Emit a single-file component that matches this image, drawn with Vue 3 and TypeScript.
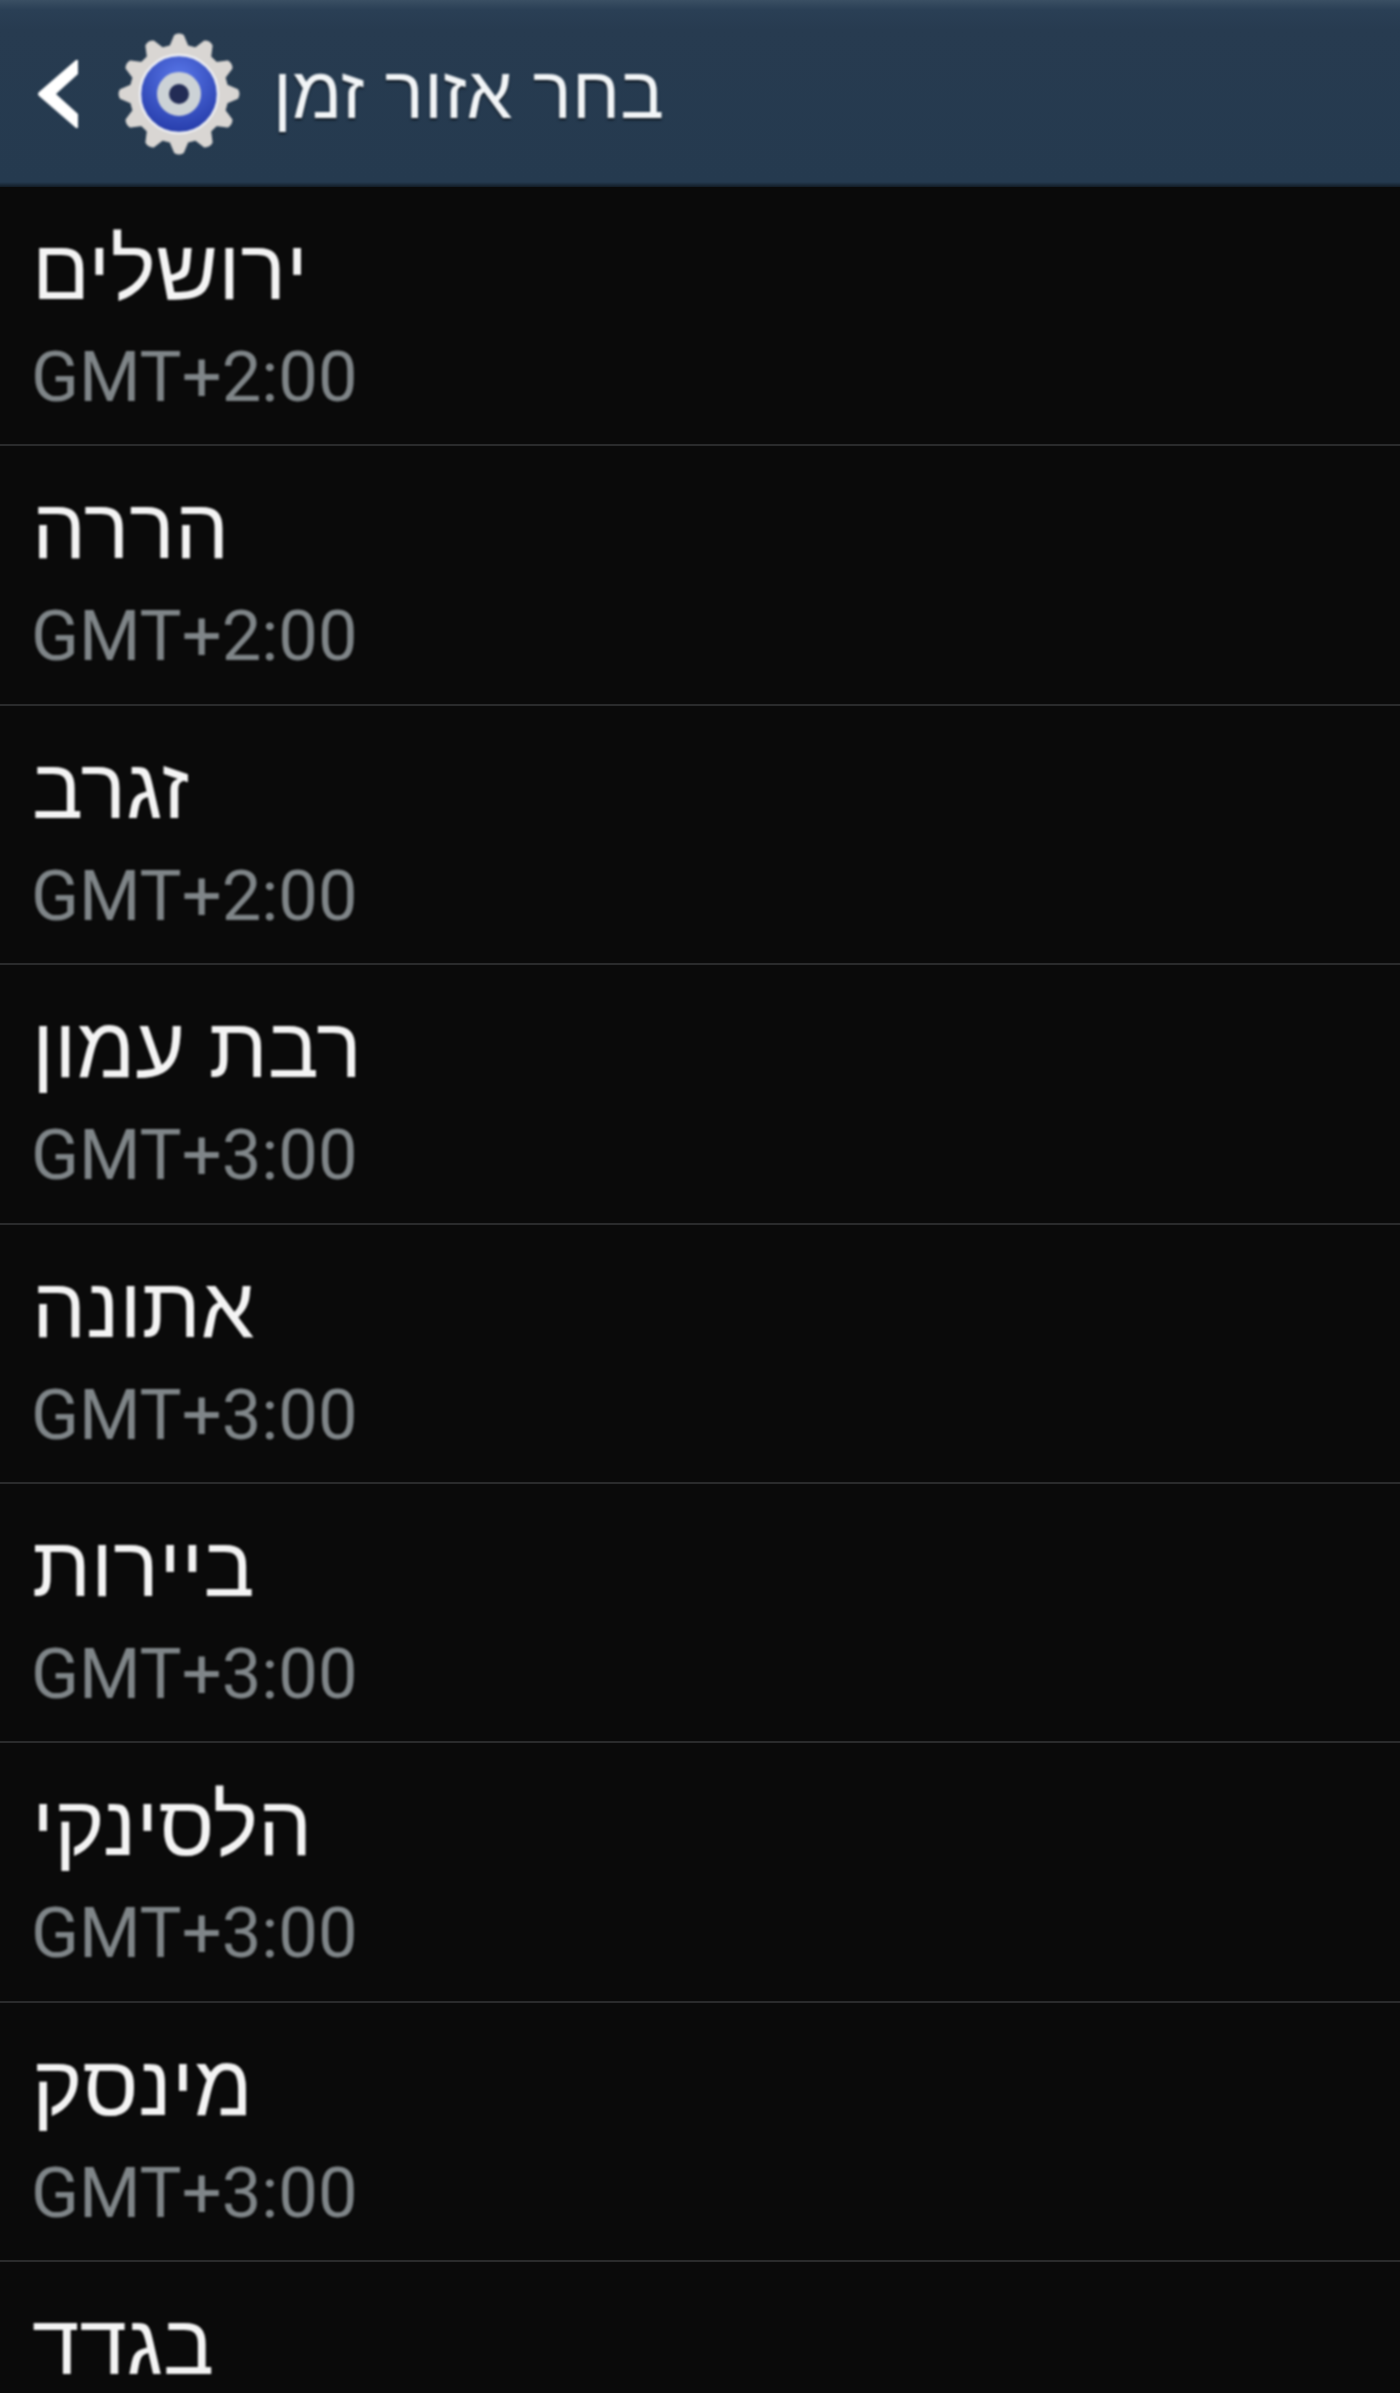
<template>
  <div class="screen">
    <header class="action-bar">
      <svg class="back" viewBox="0 0 42 70" width="42" height="70">
        <path d="M39 1 L2 33 Q0 35 2 37 L39 69 L41 69 L41 55 L19 35 L41 15 L41 1 Z" fill="#fff" />
      </svg>
      <svg class="gear" viewBox="-62 -62 124 124" width="124" height="124">
        <defs>
          <radialGradient id="ring" cx="50%" cy="30%" r="75%">
            <stop offset="0%" stop-color="#5a78ea" />
            <stop offset="100%" stop-color="#2238a6" />
          </radialGradient>
        </defs>
        <path :d="gearPath" fill="#d9d6d3" stroke="#d9d6d3" stroke-width="3" stroke-linejoin="round" />
        <circle r="39" fill="url(#ring)" stroke="#eceef3" stroke-width="2.5" />
        <circle r="16" fill="#232c55" stroke="#ccd2d6" stroke-width="12" />
      </svg>
      <h1 class="title" dir="rtl">בחר אזור זמן</h1>
    </header>
    <ul class="zones">
      <li v-for="zone in zones" :key="zone.city" class="zone">
        <span class="city" dir="rtl">{{ zone.city }}</span>
        <span v-if="zone.offset" class="offset">{{ zone.offset }}</span>
      </li>
    </ul>
  </div>
</template>

<script setup lang="ts">
interface Zone {
  city: string;
  offset?: string;
}

// last row runs off the bottom of the screen, its offset is not visible
const zones: Zone[] = [
  { city: 'ירושלים', offset: 'GMT+2:00' },
  { city: 'הררה', offset: 'GMT+2:00' },
  { city: 'זגרב', offset: 'GMT+2:00' },
  { city: 'רבת עמון', offset: 'GMT+3:00' },
  { city: 'אתונה', offset: 'GMT+3:00' },
  { city: 'ביירות', offset: 'GMT+3:00' },
  { city: 'הלסינקי', offset: 'GMT+3:00' },
  { city: 'מינסק', offset: 'GMT+3:00' },
  { city: 'בגדד' },
];

// 12 rounded teeth around the settings cog
function buildGear(teeth: number, outer: number, inner: number): string {
  const points: string[] = [];
  const step = (Math.PI * 2) / teeth;
  const at = (r: number, a: number) => `${(r * Math.sin(a)).toFixed(2)} ${(-r * Math.cos(a)).toFixed(2)}`;
  for (let i = 0; i < teeth; i++) {
    const a = i * step;
    points.push(`${i === 0 ? 'M' : 'L'}${at(inner, a - step * 0.32)}`);
    points.push(`L${at(outer, a - step * 0.12)}`);
    points.push(`Q${at(outer + 2, a)} ${at(outer, a + step * 0.12)}`);
    points.push(`L${at(inner, a + step * 0.32)}`);
  }
  return points.join(' ') + ' Z';
}

const gearPath = buildGear(12, 58, 48);
</script>

<style>
html,
body {
  margin: 0;
  background: #0a0a0a;
}
</style>

<style scoped>
.screen {
  width: 1400px;
  height: 2393px;
  overflow: hidden;
  background: #0a0a0a;
  font-family: "Liberation Sans", Arial, sans-serif;
}

.action-bar {
  display: flex;
  align-items: center;
  height: 187px;
  box-sizing: border-box;
  padding-left: 37px;
  background: linear-gradient(#3a4f63 0, #2a3f55 10px, #273b50 30px, #253a4f 182px, #121c26 187px);
}

.back,
.gear,
.title,
.city,
.offset {
  filter: blur(0.8px);
}

.back {
  flex: none;
}

.gear {
  flex: none;
  margin-left: 38px;
}

.title {
  margin: 0 0 0 32px;
  font-size: 73.2px;
  font-weight: 400;
  line-height: 1;
  color: #f2f5f7;
  text-shadow: 0 2px 2px #0d1620;
}

.zones {
  list-style: none;
  margin: 0;
  padding: 0;
}

.zone {
  display: flex;
  flex-direction: column;
  align-items: flex-start;
  box-sizing: border-box;
  height: 259.4px;
  padding: 38px 0 0 32px;
  border-bottom: 2px solid #2a2b2c;
}

.city {
  font-size: 85.5px;
  line-height: 90px;
  color: #f4f4f4;
}

.offset {
  margin-top: 21px;
  margin-left: -1px;
  font-family: Roboto, sans-serif;
  font-size: 70.5px;
  line-height: 82px;
  color: #7f8588;
}
</style>
